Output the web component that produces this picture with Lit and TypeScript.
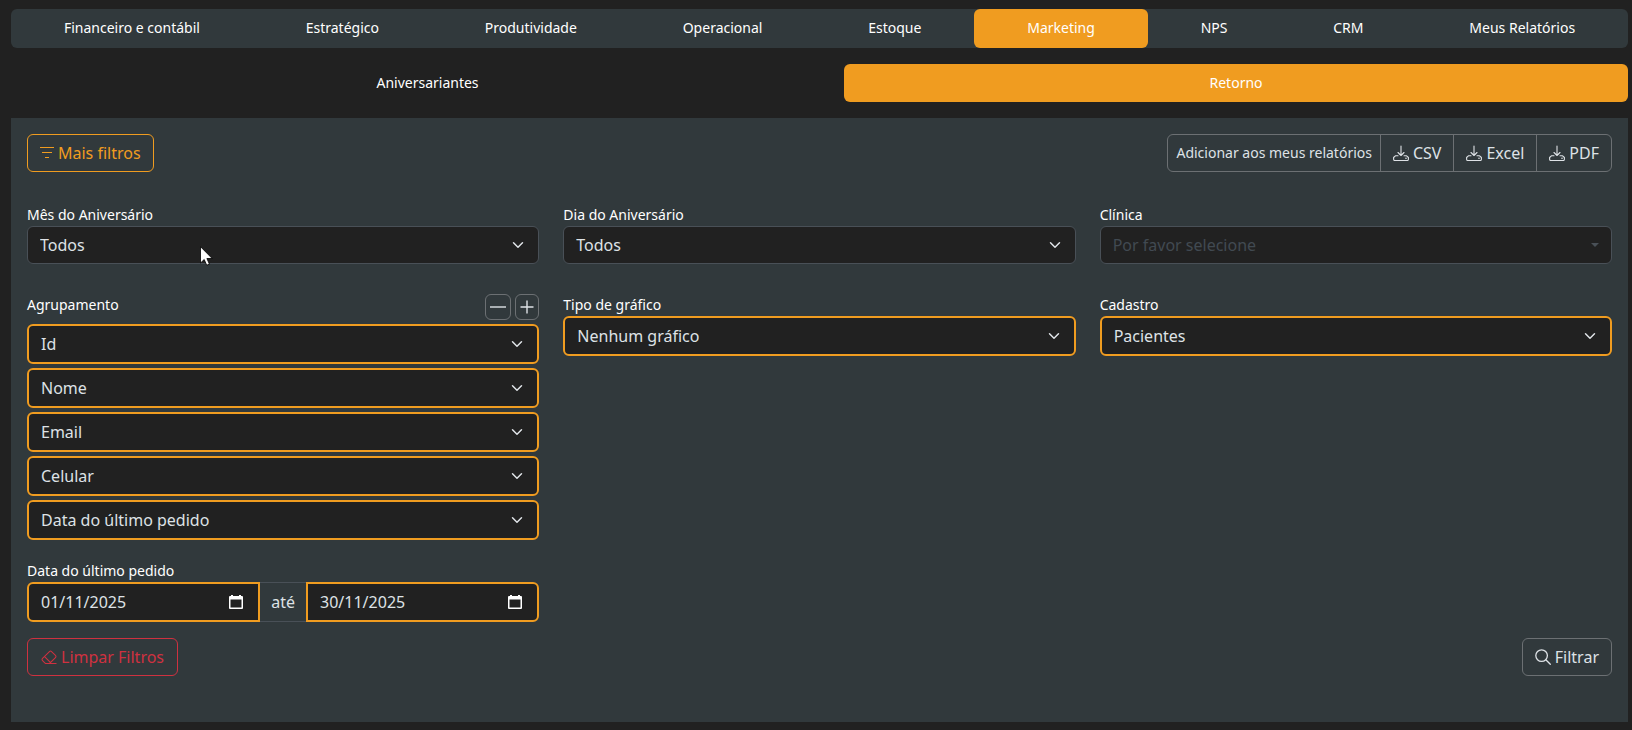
import { LitElement, html, css, svg } from "lit";
import { customElement } from "lit/decorators.js";
import { classMap } from "lit/directives/class-map.js";

const SECTIONS = [
  "Financeiro e contábil",
  "Estratégico",
  "Produtividade",
  "Operacional",
  "Estoque",
  "Marketing",
  "NPS",
  "CRM",
  "Meus Relatórios",
];
const REPORTS = ["Aniversariantes", "Retorno"];
const GROUPS = ["Id", "Nome", "Email", "Celular", "Data do último pedido"];
const EXPORTS = ["CSV", "Excel", "PDF"];

const icon = (body: unknown, narrow = false) =>
  html`<svg
    class=${classMap({ icon: true, narrow })}
    viewBox=${narrow ? "1 1 14 14" : "0 0 16 16"}
    fill="currentColor"
    aria-hidden="true"
  >${body}</svg>`;

const filterIcon = icon(
  svg`<path d="M1 2h14v1.100H1zM3 7h10v1.100H3zM6 12h4v1.100H6z" />`,
  true,
);
const downloadIcon = icon(svg`
  <g fill="none" stroke="currentColor" stroke-width="1.100" stroke-linecap="round" stroke-linejoin="round">
    <path d="M8 1v9.500M5 7.500l3 3 3-3" />
    <path d="M5 10.800H2.400L.6 12.500v1.800a1.200 1.200 0 0 0 1.200 1.200h12.400a1.200 1.200 0 0 0 1.200-1.200v-1.800l-1.800-1.700H11" />
  </g>
  <circle cx="13" cy="13.200" r=".8" />`);
const eraserIcon = icon(
  svg`<path d="M8.086 2.207a2 2 0 0 1 2.828 0l3.879 3.879a2 2 0 0 1 0 2.828l-5.5 5.5A2 2 0 0 1 7.879 15H5.120a2 2 0 0 1-1.414-.586l-2.500-2.500a2 2 0 0 1 0-2.828zm2.121.707a1 1 0 0 0-1.414 0L4.160 7.547l5.293 5.293 4.633-4.633a1 1 0 0 0 0-1.414zM8.746 13.547 3.453 8.254 1.914 9.793a1 1 0 0 0 0 1.414l2.500 2.500a1 1 0 0 0 .707.293H7.880a1 1 0 0 0 .707-.293z" /><path d="M7 14h8.500v1H7z" />`,
);
const searchIcon = icon(
  svg`<g fill="none" stroke="currentColor" stroke-width="1.300" stroke-linecap="round"><circle cx="6.600" cy="6.600" r="5.800" /><path d="m10.800 10.800 4.500 4.500" /></g>`,
);
const minusIcon = icon(svg`<path d="M0 7.300h16v1.400H0z" />`);
const plusIcon = icon(svg`<path d="M7.300 1.500h1.400v5.800h5.800v1.400H8.700v5.800H7.300V8.700H1.500V7.300h5.800z" />`, true);
const calendarIcon = html`<svg class="calendar" viewBox="0 0 14 16" aria-hidden="true">
  <path fill="currentColor" fill-rule="evenodd" d="M2 1h2v1h6V1h2v1h1a1 1 0 0 1 1 1v11a1 1 0 0 1-1 1H1a1 1 0 0 1-1-1V3a1 1 0 0 1 1-1h1zM1.500 5.500v8h11v-8z" />
</svg>`;

@customElement("app-root")
export class AppRoot extends LitElement {
  static styles = css`
    :host {
      --page: #212121;
      --panel: #31393c;
      --accent: #f09c20;
      --text: #dee2e6;
      --line: #495057;
      --outline: #6c7073;
      --danger: #cf3140;
      display: block;
      box-sizing: border-box;
      min-height: 100vh;
      padding: 9px 4px 7px 11px;
      background: var(--page);
      color: var(--text);
      font: 16px/24px "Noto Sans", "Open Sans", sans-serif;
    }
    *, *::before, *::after { box-sizing: border-box; }
    button, input, select { font: inherit; color: inherit; margin: 0; }

    .tabs { display: flex; border-radius: 6px; margin-bottom: 16px; }
    .sections { background: var(--panel); }
    .tab {
      flex: 1 1 auto;
      padding: 8px 16px;
      border-radius: 6px;
      color: #fff;
      font-size: 14px;
      line-height: 22px;
      text-align: center;
      text-decoration: none;
    }
    .sections .tab { padding-bottom: 9px; }
    .tab.active { background: var(--accent); }

    .panel {
      display: flow-root;
      background: var(--panel);
      padding: 16px 16px 46px;
    }
    .bar { display: flex; justify-content: space-between; align-items: center; }
    .bar.top { margin-bottom: 32px; }
    .bar.bottom { margin-top: 16px; }

    .btn {
      display: inline-flex;
      align-items: center;
      gap: 4px;
      height: 38px;
      padding: 0 12px;
      border: 1px solid var(--outline);
      border-radius: 6px;
      background: transparent;
      white-space: nowrap;
    }
    .btn.accent { border-color: var(--accent); color: var(--accent); }
    .btn.danger { padding: 0 13px; border-color: var(--danger); color: var(--danger); }
    .btn.small { padding: 0 8px; font-size: 14px; }
    .icon { width: 16px; height: 16px; flex: none; }
    .icon.narrow { width: 14px; height: 14px; }
    .group { display: flex; }
    .group .btn { border-radius: 0; }
    .group .btn + .btn { margin-left: -1px; }
    .group .btn:first-child { border-radius: 6px 0 0 6px; }
    .group .btn:last-child { border-radius: 0 6px 6px 0; }

    .grid {
      display: grid;
      grid-template-columns: repeat(3, minmax(0, 1fr));
      gap: 30px 24px;
      align-items: start;
    }
    .dates { margin-top: 20px; }
    .label { display: block; color: #fff; font-size: 14px; line-height: 22px; }
    .head { display: flex; justify-content: space-between; align-items: flex-start; margin-bottom: 4px; }
    .steps { display: flex; gap: 4px; }
    .step {
      display: flex;
      align-items: center;
      height: 26px;
      padding: 0 4px;
      border: 1px solid var(--outline);
      border-radius: 6px;
      background: transparent;
    }
    .stack { display: grid; gap: 4px; }

    .control {
      display: block;
      width: 100%;
      min-width: 0;
      height: 38px;
      padding: 0 36px 0 12px;
      border: 1px solid var(--line);
      border-radius: 6px;
      background-color: var(--page);
      color: var(--text);
      outline: 0;
    }
    select.control {
      appearance: none;
      background-image: url("data:image/svg+xml,%3Csvg xmlns='http://www.w3.org/2000/svg' viewBox='0 0 16 16'%3E%3Cpath fill='none' stroke='%23dee2e6' stroke-linecap='round' stroke-linejoin='round' stroke-width='2' d='m2 5 6 6 6-6'/%3E%3C/svg%3E");
      background-repeat: no-repeat;
      background-position: right 12px center;
      background-size: 16px 12px;
    }
    .control.marked { height: 40px; border: 2px solid var(--accent); }
    select.control.off {
      color: #414a52;
      opacity: 1;
      background-image: url("data:image/svg+xml,%3Csvg xmlns='http://www.w3.org/2000/svg' viewBox='0 0 8 4'%3E%3Cpath fill='%23495057' d='M0 0h8L4 4z'/%3E%3C/svg%3E");
      background-position: right 12px center;
      background-size: 8px 4px;
    }

    .range { display: flex; }
    .date { position: relative; flex: 1 1 0; min-width: 0; }
    .date.from .control { border-radius: 6px 0 0 6px; }
    .date.to .control { border-radius: 0 6px 6px 0; }
    .calendar {
      position: absolute;
      right: 17px;
      top: 12px;
      width: 14px;
      height: 16px;
      color: #fff;
      pointer-events: none;
    }
    .until {
      display: flex;
      align-items: center;
      padding: 0 11px;
      border: solid var(--line);
      border-width: 1px 0;
    }

    .pointer {
      position: absolute;
      left: 200px;
      top: 246px;
      width: 13px;
      height: 20px;
      pointer-events: none;
    }
  `;

  private tab(name: string, current: string) {
    return html`<a
      class=${classMap({ tab: true, active: name === current })}
      href="#"
      aria-current=${name === current ? "page" : "false"}
      >${name}</a
    >`;
  }

  private field(id: string, label: string, value: string, marked = false) {
    return html`<div>
      <label class="label" for=${id}>${label}</label>
      <select id=${id} class=${classMap({ control: true, marked })}>
        <option>${value}</option>
      </select>
    </div>`;
  }

  render() {
    return html`
      <nav class="tabs sections">${SECTIONS.map((s) => this.tab(s, "Marketing"))}</nav>
      <nav class="tabs">${REPORTS.map((r) => this.tab(r, "Retorno"))}</nav>
      <main class="panel">
        <div class="bar top">
          <button class="btn accent" type="button">${filterIcon}<span>Mais filtros</span></button>
          <div class="group">
            <button class="btn small" type="button">Adicionar aos meus relatórios</button>
            ${EXPORTS.map(
              (e) => html`<button class="btn" type="button">${downloadIcon}<span>${e}</span></button>`,
            )}
          </div>
        </div>
        <div class="grid">
          ${this.field("month", "Mês do Aniversário", "Todos")}
          ${this.field("day", "Dia do Aniversário", "Todos")}
          <div>
            <label class="label" for="clinic">Clínica</label>
            <select id="clinic" class="control off" disabled>
              <option>Por favor selecione</option>
            </select>
          </div>
          <div>
            <div class="head">
              <label class="label" for="group-0">Agrupamento</label>
              <div class="steps">
                <button class="step" type="button" aria-label="Remover">${minusIcon}</button>
                <button class="step" type="button" aria-label="Adicionar">${plusIcon}</button>
              </div>
            </div>
            <div class="stack">
              ${GROUPS.map(
                (g, i) => html`<select id="group-${i}" class="control marked" aria-label=${g}>
                  <option>${g}</option>
                </select>`,
              )}
            </div>
          </div>
          ${this.field("chart", "Tipo de gráfico", "Nenhum gráfico", true)}
          ${this.field("register", "Cadastro", "Pacientes", true)}
        </div>
        <div class="grid dates">
          <div>
            <label class="label" for="from">Data do último pedido</label>
            <div class="range">
              <div class="date from">
                <input id="from" class="control marked" type="text" .value=${"01/11/2025"} />
                ${calendarIcon}
              </div>
              <label class="until" for="to">até</label>
              <div class="date to">
                <input id="to" class="control marked" type="text" .value=${"30/11/2025"} />
                ${calendarIcon}
              </div>
            </div>
          </div>
        </div>
        <div class="bar bottom">
          <button class="btn danger" type="button">${eraserIcon}<span>Limpar Filtros</span></button>
          <button class="btn" type="button">${searchIcon}<span>Filtrar</span></button>
        </div>
      </main>
      <svg class="pointer" viewBox="0 0 13 20" aria-hidden="true">
        <path
          d="M.5.700v16.300l3.700-3.500 2.500 5.700 2.700-1.100-2.500-5.600h5.300z"
          fill="#fff"
          stroke="#000"
          stroke-width=".8"
          stroke-linejoin="round"
        />
      </svg>
    `;
  }
}
